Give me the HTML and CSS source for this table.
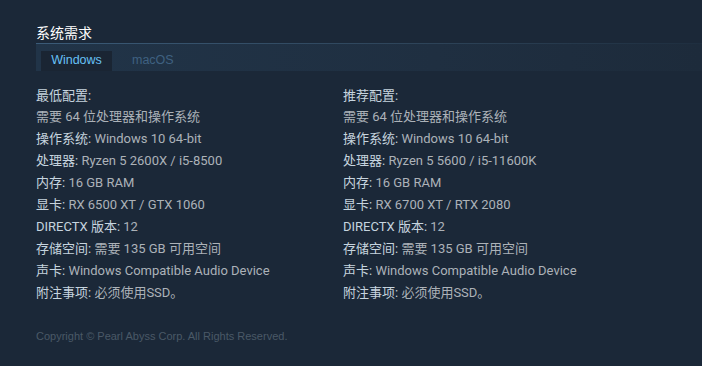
FILE: index.html
```html
<!DOCTYPE html>
<html lang="zh-CN">
<head>
<meta charset="utf-8">
<link rel="stylesheet" href="styles.css">
</head>
<body>
<div class="sysreq">
  <h2 class="title">系统需求</h2>
  <div class="tabs">
    <div class="tab active">Windows</div>
    <div class="tab">macOS</div>
  </div>
  <div class="cols">
    <div class="col">
      <div class="head">最低配置:</div>
      <ul class="list">
        <li>需要 64 位处理器和操作系统</li>
        <li><span class="lbl">操作系统:</span> Windows 10 64-bit</li>
        <li><span class="lbl">处理器:</span> Ryzen 5 2600X / i5-8500</li>
        <li><span class="lbl">内存:</span> 16 GB RAM</li>
        <li><span class="lbl">显卡:</span> RX 6500 XT / GTX 1060</li>
        <li><span class="lbl">DIRECTX 版本:</span> 12</li>
        <li><span class="lbl">存储空间:</span> 需要 135 GB 可用空间</li>
        <li><span class="lbl">声卡:</span> Windows Compatible Audio Device</li>
        <li><span class="lbl">附注事项:</span> 必须使用SSD。</li>
      </ul>
    </div>
    <div class="col">
      <div class="head">推荐配置:</div>
      <ul class="list">
        <li>需要 64 位处理器和操作系统</li>
        <li><span class="lbl">操作系统:</span> Windows 10 64-bit</li>
        <li><span class="lbl">处理器:</span> Ryzen 5 5600 / i5-11600K</li>
        <li><span class="lbl">内存:</span> 16 GB RAM</li>
        <li><span class="lbl">显卡:</span> RX 6700 XT / RTX 2080</li>
        <li><span class="lbl">DIRECTX 版本:</span> 12</li>
        <li><span class="lbl">存储空间:</span> 需要 135 GB 可用空间</li>
        <li><span class="lbl">声卡:</span> Windows Compatible Audio Device</li>
        <li><span class="lbl">附注事项:</span> 必须使用SSD。</li>
      </ul>
    </div>
  </div>
  <div class="copyright">Copyright © Pearl Abyss Corp. All Rights Reserved.</div>
</div>
</body>
</html>
```
FILE: styles.css
```css
html, body {
  margin: 0;
  padding: 0;
  background: #1b2838;
  height: 100%;
}
body {
  font-family: Roboto, "Liberation Sans", "Noto Sans CJK SC", sans-serif;
  color: #acb2b8;
}
.sysreq {
  padding: 22px 0 0 36px;
}
.title {
  margin: 0;
  font-size: 14px;
  font-weight: normal;
  color: #ffffff;
  line-height: 20px;
  height: 21px;
  font-family: "Noto Sans CJK SC", sans-serif;
}
.tabs {
  border-top: 1px solid;
  border-image: linear-gradient(to right, #3b5b78 0%, #2d4358 60%, #1e2e3f 100%) 1;
  background: linear-gradient(to right, #213448 0%, #1f2f41 60%, #1d2b3b 100%);
  height: 28px;
  padding: 8px 0 0 5px;
  box-sizing: border-box;
  display: flex;
  align-items: flex-end;
}
.tab {
  height: 20px;
  line-height: 19px;
  font-size: 12.5px;
  font-family: "Liberation Sans", Arial, sans-serif;
  padding: 0 11px;
  color: #3f6181;
}
.tab.active {
  background: #1a2533;
  color: #67c1f5;
  width: 71px;
  box-sizing: border-box;
  padding: 0;
  text-align: center;
  margin-right: 9px;
}
.cols {
  display: grid;
  grid-template-columns: 307px 307px;
  margin-top: 15px;
}
.head {
  color: #c6d4df;
  font-size: 13px;
  line-height: 20px;
  margin-bottom: 2px;
}
.list {
  list-style: none;
  margin: 0;
  padding: 0;
  font-size: 13px;
}
.list li {
  line-height: 18px;
  margin-bottom: 4px;
}
.lbl {
  color: #c6d4df;
}
.copyright {
  margin-top: 24px;
  font-size: 11px;
  font-family: "Liberation Sans", Arial, sans-serif;
  color: #4a5967;
}
```
